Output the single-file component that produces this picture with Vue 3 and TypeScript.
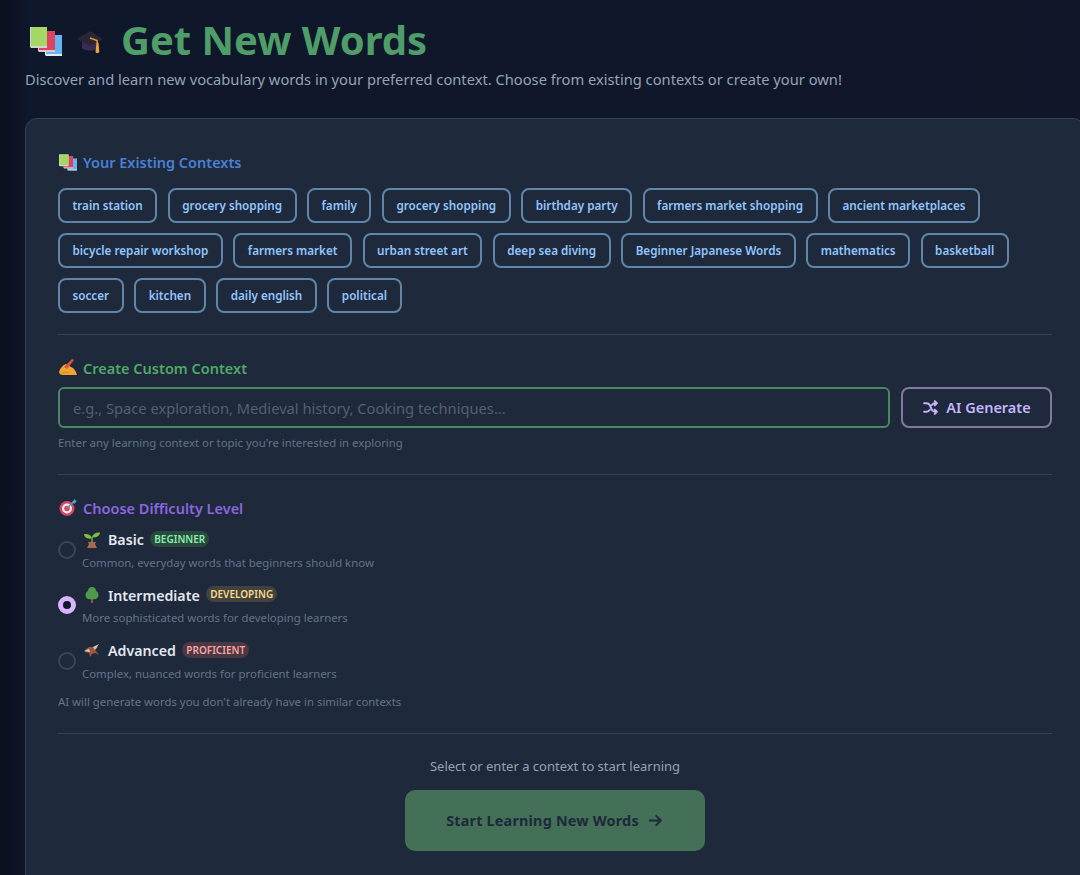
<template>
  <div class="page">
    <header class="page-head">
      <h1 class="title">
        <svg class="emoji-books" viewBox="0 0 32 29"><use href="#books" /></svg>
        <svg class="emoji-cap" viewBox="0 0 26 24">
          <path d="M5 11v7c3 3.500 13 3.500 16 0v-7Z" fill="#3a2c52" />
          <path d="M13 1 26 9 13 16 0 9Z" fill="#2b2538" />
          <path d="M13 8 20 10.500 20.500 14" fill="none" stroke="#e8963a" stroke-width="1.600" />
          <path d="M19.500 13h2l.8 9c-1 1.500-3 1.500-3.800 0Z" fill="#f0a542" />
        </svg>
        <span>Get New Words</span>
      </h1>
      <p class="subtitle">Discover and learn new vocabulary words in your preferred context. Choose from existing contexts or create your own!</p>
    </header>

    <main class="card">
      <svg width="0" height="0" class="defs">
        <symbol id="books" viewBox="0 0 32 29">
          <path d="M15 8h17v21H16l-1-1Z" fill="#e4e9f2" />
          <path d="M16 8h16v19H16Z" fill="#62b5ef" />
          <path d="M8 4h17v21H9l-1-1Z" fill="#d9c8d0" />
          <path d="M9 4h16v19H9Z" fill="#dd4264" />
          <path d="M0 0h17v21H1l-1-1Z" fill="#cfd6c8" />
          <path d="M1 0h16v19H1Z" fill="#a5d766" />
        </symbol>
      </svg>

      <section class="section">
        <h2 class="section-title blue">
          <svg class="head-icon" viewBox="0 0 32 29"><use href="#books" /></svg>
          Your Existing Contexts
        </h2>
        <div class="chips">
          <button v-for="(c, i) in contexts" :key="i" class="chip">{{ c }}</button>
        </div>
      </section>

      <section class="section">
        <h2 class="section-title green">
          <svg class="head-icon" viewBox="0 0 18 17">
            <path d="M0 13c1-4 4-7 7-8l5 3c3 1 5 4 6 8H4c-2 0-4-1-4-3Z" fill="#f2a431" />
            <path d="M3 14c2-1 5-1 7 0" fill="none" stroke="#d98220" stroke-width="1" />
            <path d="M5 8 13 0l2 1-7 9Z" fill="#d8573c" />
          </svg>
          Create Custom Context
        </h2>
        <div class="input-row">
          <input class="context-input" placeholder="e.g., Space exploration, Medieval history, Cooking techniques..." />
          <button class="ai-btn">
            <svg viewBox="0 0 24 24" class="shuffle">
              <path d="M3 6h3.500c2 0 3.500 1 4.700 2.800l2.600 6.400C15 17 16.500 18 18.500 18H21M3 18h3.500c2 0 3.300-.9 4.300-2.400M14 8.400C15 6.900 16.500 6 18.500 6H21M18 3l3 3-3 3M18 15l3 3-3 3" fill="none" stroke="currentColor" stroke-width="2.800" stroke-linecap="round" stroke-linejoin="round" />
            </svg>
            AI Generate
          </button>
        </div>
        <p class="hint">Enter any learning context or topic you're interested in exploring</p>
      </section>

      <section class="section">
        <h2 class="section-title purple levels-title">
          <svg class="head-icon" viewBox="0 0 18 17">
            <circle cx="8" cy="9.500" r="7.500" fill="#d9455f" />
            <circle cx="8" cy="9.500" r="5" fill="#eeeef0" />
            <circle cx="8" cy="9.500" r="2.800" fill="#d9455f" />
            <path d="M8 9.500 14 3" stroke="#5c8fc0" stroke-width="1.500" />
            <path d="M13 3l3-3 .5 1.500L18 2l-3 3Z" fill="#4a9fe0" />
          </svg>
          Choose Difficulty Level
        </h2>
        <div class="levels">
          <label v-for="l in levels" :key="l.name" class="level">
            <span class="radio" :class="{ checked: l.name === selected }"></span>
            <span class="level-body">
              <span class="level-top">
                <svg v-if="l.icon === 'sprout'" class="level-icon" viewBox="0 0 16 16">
                  <path d="M8 10V5" stroke="#6cb23c" stroke-width="1.500" />
                  <path d="M8 6C7 3 4 1.500 0 2c0 3 4 6 8 4ZM8 5c1-3 4-5 8-4.500 0 3-4 6-8 4.500Z" fill="#7cc242" />
                  <path d="M4 10h8l-1 2 2 4H3l2-4Z" fill="#a96a50" />
                </svg>
                <svg v-else-if="l.icon === 'tree'" class="level-icon" viewBox="0 0 16 16">
                  <path d="M7 10h2v6H7Z" fill="#8a5a3c" />
                  <path d="M8 0c3 0 4 2 4 4 3 1 3.500 6.500 0 8-2 .6-6 .6-8 0C.5 10.500 1 5 4 4c0-2 1-4 4-4Z" fill="#4f9a4c" />
                </svg>
                <svg v-else class="level-icon" viewBox="0 0 16 16">
                  <path d="M1 7 5 4h9L11 7l4 5-4-2-3 1-2 3-1-4-4-1Z" fill="#a0563e" />
                  <path d="M9 4l6-3-4 6Z" fill="#c9c4c0" />
                  <path d="M0 8l5-2 1 3Z" fill="#d6d0cc" />
                </svg>
                <span class="level-name">{{ l.name }}</span>
                <span class="badge" :class="l.tone">{{ l.badge }}</span>
              </span>
              <span class="level-desc">{{ l.desc }}</span>
            </span>
          </label>
        </div>
        <p class="hint ai-note">AI will generate words you don't already have in similar contexts</p>
      </section>

      <footer class="actions">
        <p class="status">Select or enter a context to start learning</p>
        <button class="start-btn">
          Start Learning New Words
          <svg viewBox="0 0 24 24" class="arrow">
            <path d="M4 12h15M13 5.500 19.500 12 13 18.500" fill="none" stroke="currentColor" stroke-width="2.800" stroke-linecap="round" stroke-linejoin="round" />
          </svg>
        </button>
      </footer>
    </main>
  </div>
</template>

<script setup lang="ts">
const contexts: string[] = [
  'train station', 'grocery shopping', 'family', 'grocery shopping', 'birthday party',
  'farmers market shopping', 'ancient marketplaces', 'bicycle repair workshop', 'farmers market',
  'urban street art', 'deep sea diving', 'Beginner Japanese Words', 'mathematics', 'basketball',
  'soccer', 'kitchen', 'daily english', 'political',
]

const selected = 'Intermediate'

const levels = [
  { name: 'Basic', icon: 'sprout', badge: 'BEGINNER', tone: 'good', desc: 'Common, everyday words that beginners should know' },
  { name: 'Intermediate', icon: 'tree', badge: 'DEVELOPING', tone: 'warn', desc: 'More sophisticated words for developing learners' },
  { name: 'Advanced', icon: 'hammer', badge: 'PROFICIENT', tone: 'bad', desc: 'Complex, nuanced words for proficient learners' },
]
</script>

<style>
html, body {
  margin: 0;
  height: 875px;
  overflow: hidden;
  background: #0f172a;
}
</style>

<style scoped>
.page {
  height: 875px;
  box-sizing: border-box;
  padding: 14px 0 0 25px;
  width: 1110px;
  overflow: hidden;
  font-family: "Noto Sans", "Open Sans", sans-serif;
  background: linear-gradient(90deg, #0b1020 0, #0f172a 30px, #111729 100%);
}
.page-head {
  margin-bottom: 29px;
}
.title {
  display: flex;
  align-items: center;
  margin: 0;
  height: 52px;
  font-size: 40px;
  font-weight: 700;
  color: #4f9d69;
  line-height: 52px;
}
.emoji-books {
  width: 32px;
  height: 29px;
  margin: 3px 0 0 5px;
}
.emoji-cap {
  width: 26px;
  height: 24px;
  margin: 4px 18px 0 15px;
}
.subtitle {
  margin: 3px 0 0;
  font-size: 14.700px;
  line-height: 20px;
  color: #94a3b8;
}
.card {
  width: 1060px;
  box-sizing: border-box;
  padding: 33px 32px 30px;
  background: #1e293b;
  border: 1px solid #334155;
  border-radius: 12px;
  height: 800px;
}
.defs {
  position: absolute;
}
.section {
  border-bottom: 1px solid #334155;
  margin-bottom: 23px;
  padding-bottom: 21px;
}
.section-title {
  display: flex;
  align-items: center;
  gap: 6px;
  margin: 0 0 9px;
  font-size: 14.500px;
  line-height: 20px;
  font-weight: 600;
}
.levels-title {
  margin-bottom: 11px;
}
.blue { color: #4a80d4; }
.green { color: #4fa868; }
.purple { color: #8b66e0; }
.head-icon {
  width: 18px;
  height: 17px;
  margin-left: 1px;
}
.chips {
  display: flex;
  flex-wrap: wrap;
  gap: 10.500px;
  margin-top: 16px;
}
.chip {
  height: 34.500px;
  padding: 0 12.500px;
  border: 2px solid #5f86a9;
  border-radius: 8px;
  background: transparent;
  color: #93c5fd;
  font-family: inherit;
  font-size: 11.700px;
  font-weight: 600;
}
.input-row {
  display: flex;
  gap: 11px;
}
.context-input {
  flex: 1;
  min-width: 0;
  height: 41px;
  box-sizing: border-box;
  padding: 2px 13px 0;
  background: transparent;
  border: 2px solid #468a60;
  border-radius: 6px;
  font-family: inherit;
  font-size: 14.700px;
  color: #e2e8f0;
  outline: none;
}
.context-input::placeholder {
  color: #556070;
}
.ai-btn {
  width: 151px;
  height: 41px;
  display: flex;
  align-items: center;
  justify-content: center;
  gap: 7px;
  background: transparent;
  border: 2px solid #83789f;
  border-radius: 8px;
  color: #c4b5fd;
  font-family: inherit;
  font-size: 14.500px;
  font-weight: 600;
}
.shuffle {
  width: 17px;
  height: 17px;
}
.hint {
  margin: 7px 0 0;
  padding-bottom: 2px;
  font-size: 11.400px;
  line-height: 16px;
  color: #64748b;
}
.levels {
  display: flex;
  flex-direction: column;
  gap: 13.500px;
}
.level {
  display: flex;
  align-items: center;
  gap: 6px;
}
.radio {
  width: 18px;
  height: 18px;
  box-sizing: border-box;
  border: 2px solid #3b4555;
  border-radius: 50%;
}
.radio.checked {
  border: 5.500px solid #d8b4fe;
  background: #111827;
}
.level-body {
  display: flex;
  flex-direction: column;
  gap: 4px;
}
.level-top {
  display: flex;
  align-items: center;
  gap: 8px;
  height: 22px;
}
.level-icon {
  width: 16px;
  height: 16px;
  margin-left: 2px;
}
.level-name {
  font-size: 14.200px;
  font-weight: 600;
  color: #e2e8f0;
}
.badge {
  font-size: 10px;
  font-weight: 600;
  line-height: 16px;
  padding: 0 4px;
  border-radius: 8px;
  margin: -2px 0 0 -1.500px;
}
.badge.good { color: #86efac; background: #2a4a40; }
.badge.warn { color: #f8d98c; background: #42423f; }
.badge.bad { color: #fca5a5; background: #4a3842; }
.level-desc {
  font-size: 11.400px;
  line-height: 16px;
  color: #64748b;
}
.ai-note {
  margin-top: 12px;
}
.actions {
  display: flex;
  flex-direction: column;
  align-items: center;
  margin-top: -1px;
}
.status {
  margin: 0 0 14px;
  font-size: 13px;
  line-height: 20px;
  color: #94a3b8;
}
.start-btn {
  width: 300px;
  height: 61px;
  display: flex;
  align-items: center;
  justify-content: center;
  gap: 8px;
  background: #447057;
  border: none;
  border-radius: 10px;
  color: #1e293b;
  font-family: inherit;
  font-size: 14.400px;
  letter-spacing: 0.200px;
  font-weight: 700;
}
.arrow {
  width: 17px;
  height: 17px;
}
</style>
